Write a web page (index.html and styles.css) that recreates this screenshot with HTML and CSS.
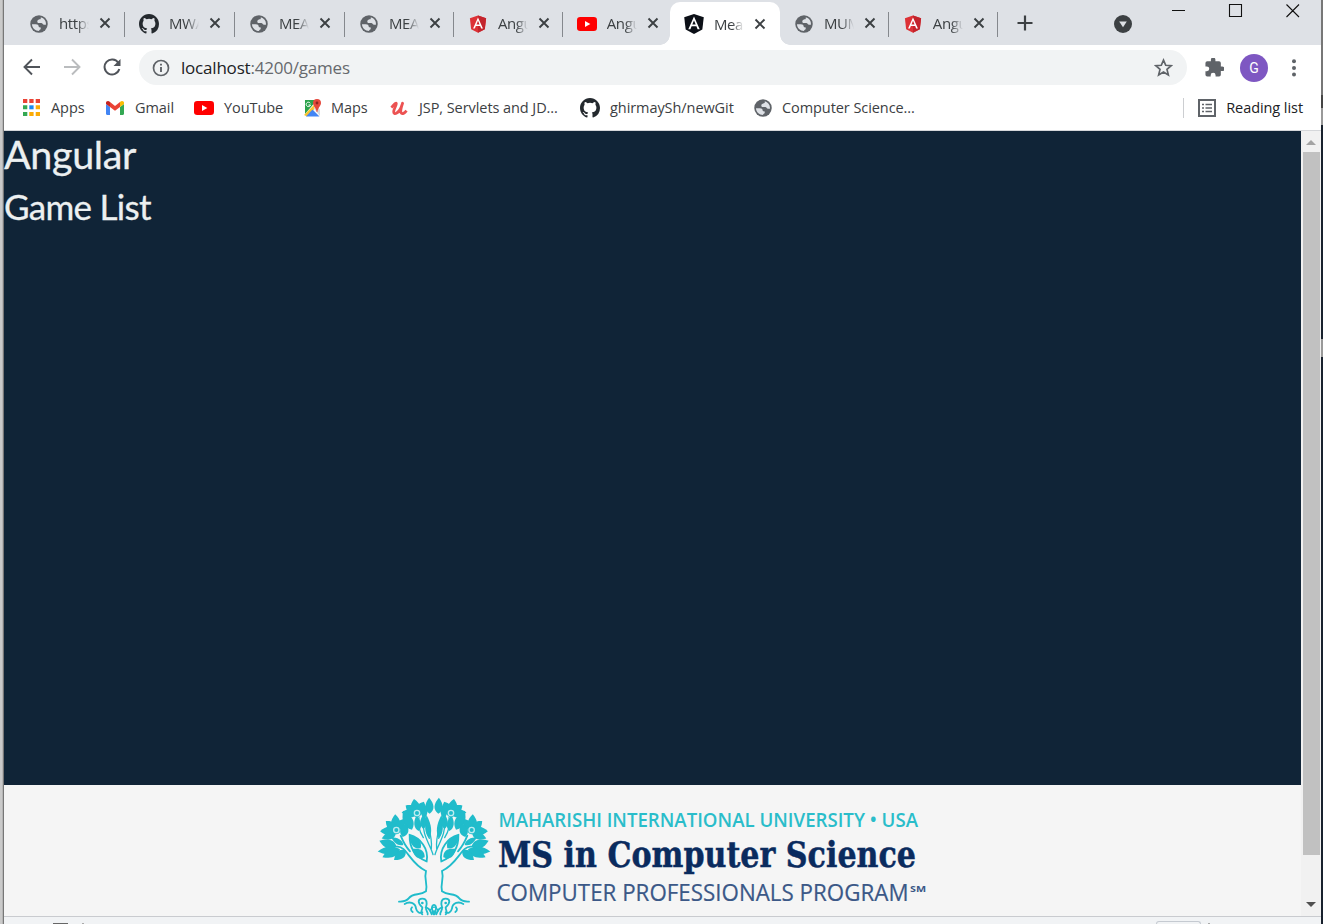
FILE: index.html
```html
<!DOCTYPE html>
<html lang="en">
<head>
<meta charset="utf-8">
<title>Games</title>
<link rel="stylesheet" href="styles.css">
</head>
<body>
<svg class="defs" width="0" height="0">
  <symbol id="globe" viewBox="0 0 20 20"><circle cx="10" cy="10" r="9.700" fill="#5f6368"/><path class="land" d="M2.200 10.400h4.300c2 0 3.100.8 3.100 2.200 0 1 .7 1.300 2.300 1.300v2c-1 .4-1.800.8-1.800 2C5.800 17.900 2.200 14.500 2.200 10.400zM12 2.500v1.400c0 1.300-3.900.8-3.900 3.200 0 1.700 1.400 1.900 3 1.900h1.500c1.400 0 1.200 1.700 2.700 1.700h2.400c.4-3.900-2-7.200-5.700-8.200z"/></symbol>
  <symbol id="github" viewBox="0 0 16 16"><path fill="#24292e" d="M8 0C3.580 0 0 3.580 0 8c0 3.540 2.290 6.530 5.470 7.590.4.070.550-.170.550-.380 0-.190-.010-.820-.010-1.490-2.010.370-2.530-.490-2.690-.940-.090-.230-.480-.940-.820-1.130-.280-.150-.680-.520-.010-.530.630-.010 1.080.580 1.230.820.720 1.210 1.870.870 2.330.660.070-.520.280-.870.510-1.070-1.780-.200-3.640-.890-3.640-3.950 0-.870.310-1.590.820-2.150-.080-.200-.360-1.020.080-2.120 0 0 .670-.210 2.200.820a7.600 7.600 0 0 1 4 0c1.530-1.040 2.200-.820 2.200-.820.440 1.100.160 1.920.080 2.120.510.560.820 1.270.820 2.150 0 3.070-1.870 3.750-3.650 3.950.290.250.540.730.540 1.480 0 1.070-.010 1.930-.010 2.200 0 .210.150.460.550.380A8 8 0 0 0 16 8c0-4.420-3.580-8-8-8z"/></symbol>
  <symbol id="ngred" viewBox="0 0 20 20"><path fill="#dd3136" d="M10 .5l9 3.200-1.400 12L10 19.800l-7.600-4.100L1 3.700z"/><path fill="#c3242c" d="M10 .5l9 3.200-1.400 12L10 19.800z"/><path fill="#fff" fill-rule="evenodd" d="M10 2.800L4.500 15h2l1.100-2.800h4.800l1.100 2.800h2zM10 6.500l1.700 4H8.300z"/></symbol>
  <symbol id="ngblack" viewBox="0 0 20 20"><path fill="#0b0f16" d="M10 0l9.800 3.300-1.500 12.200L10 20l-8.300-4.500L.2 3.300z"/><path fill="#fff" fill-rule="evenodd" d="M10 2.600L4.300 15.200h2.100l1.200-3h4.800l1.200 3h2.100zM10 6.600l1.700 4H8.300z"/></symbol>
  <symbol id="youtube" viewBox="0 0 20 14"><rect width="20" height="14" rx="3.200" fill="#f00"/><path fill="#fff" d="M8 4l5.300 3L8 10z"/></symbol>
  <symbol id="close" viewBox="0 0 12 12"><path d="M1.500 1.500l9 9M10.500 1.500l-9 9" stroke="#3c4043" stroke-width="1.900"/></symbol>
</svg>
<div class="desktop">
  <div class="edge-left"></div>
  <div class="window">
    <header class="tabs">
      <div class="tab wide"><svg class="fav"><use href="#globe"/></svg><span class="name">https:</span><svg class="x"><use href="#close"/></svg></div>
      <div class="tab wide"><svg class="fav big"><use href="#github"/></svg><span class="name">MWA</span><svg class="x"><use href="#close"/></svg></div>
      <div class="tab wide"><svg class="fav"><use href="#globe"/></svg><span class="name">MEAN</span><svg class="x"><use href="#close"/></svg></div>
      <div class="tab"><svg class="fav"><use href="#globe"/></svg><span class="name">MEAN</span><svg class="x"><use href="#close"/></svg></div>
      <div class="tab"><svg class="fav"><use href="#ngred"/></svg><span class="name">Angular</span><svg class="x"><use href="#close"/></svg></div>
      <div class="tab last"><svg class="fav big"><use href="#youtube"/></svg><span class="name">Angular</span><svg class="x"><use href="#close"/></svg></div>
      <div class="tab active"><svg class="fav big"><use href="#ngblack"/></svg><span class="name">Mean</span><svg class="x"><use href="#close"/></svg></div>
      <div class="tab"><svg class="fav"><use href="#globe"/></svg><span class="name">MUM</span><svg class="x"><use href="#close"/></svg></div>
      <div class="tab"><svg class="fav"><use href="#ngred"/></svg><span class="name">Angular</span><svg class="x"><use href="#close"/></svg></div>
      <svg class="plus" viewBox="0 0 16 16"><path d="M8 .5v15M.5 8h15" stroke="#3c4043" stroke-width="2.200"/></svg>
      <svg class="tabsearch" viewBox="0 0 18 18"><circle cx="9" cy="9" r="9" fill="#3c4043"/><path fill="#dee1e6" d="M5.200 6.500h7.600L9 12.300z"/></svg>
      <svg class="winbtns" viewBox="0 0 128 16"><path d="M0 8.500h13M57.500 2.500h12v12h-12zM114.500 2.500l12.500 12.500M127 2.500L114.500 15" fill="none" stroke="#111" stroke-width="1.100"/></svg>
    </header>
    <div class="toolbar">
      <svg class="nav" viewBox="0 0 18 18"><path d="M17 9H2M9 1.500L1.500 9 9 16.500" fill="none" stroke="#50545a" stroke-width="1.900"/></svg>
      <svg class="nav" viewBox="0 0 18 18"><path d="M1 9h15M9 1.500L16.500 9 9 16.500" fill="none" stroke="#babcbe" stroke-width="1.900"/></svg>
      <svg class="nav" viewBox="0 0 18 18"><path d="M15.300 4.800A7.500 7.500 0 1 0 16.300 11" fill="none" stroke="#50545a" stroke-width="2"/><path d="M17.500 1v7h-7z" fill="#50545a"/></svg>
      <div class="address">
        <svg class="info" viewBox="0 0 18 18"><circle cx="9" cy="9" r="7.500" fill="none" stroke="#5f6368" stroke-width="1.700"/><path d="M9 8v5M9 4.700v1.800" stroke="#5f6368" stroke-width="1.900"/></svg>
        <span class="url"><b>localhost</b>:4200/games</span>
        <svg class="star" viewBox="0 0 18 18"><path d="M9 2l2.100 4.900 5.200.4-4 3.500 1.300 5.200L9 13.200 4.400 16l1.300-5.200-4-3.500 5.200-.4z" fill="none" stroke="#5f6368" stroke-width="1.600"/></svg>
      </div>
      <svg class="puzzle" viewBox="1.500 1.500 21 21"><path fill="#5f6368" d="M20.500 11H19V7a2 2 0 0 0-2-2h-4V3.500a2.500 2.500 0 0 0-5 0V5H4a2 2 0 0 0-2 2v3.800h1.500a2.700 2.700 0 0 1 0 5.400H2V20a2 2 0 0 0 2 2h3.800v-1.500a2.700 2.700 0 0 1 5.400 0V22H17a2 2 0 0 0 2-2v-4h1.500a2.500 2.500 0 0 0 0-5z"/></svg>
      <span class="avatar">G</span>
      <svg class="dots" viewBox="0 0 4 18"><g fill="#5f6368"><circle cx="2" cy="2.200" r="2"/><circle cx="2" cy="9" r="2"/><circle cx="2" cy="15.600" r="2"/></g></svg>
    </div>
    <nav class="bookmarks">
      <a class="apps"><svg width="17" height="17" viewBox="0 0 17 17"><path fill="#ea4335" d="M0 0h4.300v4H0zM6.300 0h4.300v4H6.300zM12.700 0H17v4h-4.300z"/><path fill="#34a853" d="M0 6.300h4.300v4H0zM0 13h4.300v4H0z"/><path fill="#1a88f0" d="M6.300 6.300h4.300v4H6.300z"/><path fill="#fbab05" d="M12.700 6.300H17v4h-4.300zM6.300 13h4.300v4H6.300zM12.700 13H17v4h-4.300z"/></svg><span>Apps</span></a>
      <a class="gmail"><svg width="18" height="14" viewBox="0 0 18 14"><path fill="#4285f4" d="M0 3l4 3v8H1.200C.5 14 0 13.500 0 12.800z"/><path fill="#34a853" d="M14 6l4-3v9.800c0 .7-.5 1.200-1.200 1.200H14z"/><path fill="#ea4335" d="M4 1l5 4 5-4v5L9 9.800 4 6z"/><path fill="#c5221f" d="M0 2C0 .1 2.300-.6 4 1v5L0 3z"/><path fill="#fbbc04" d="M18 2c0-1.900-2.300-2.600-4-1v5l4-3z"/></svg><span>Gmail</span></a>
      <a class="yt"><svg width="20" height="14"><use href="#youtube"/></svg><span>YouTube</span></a>
      <a class="maps"><svg width="19" height="18" viewBox="0 0 19 18"><path fill="#2ba24c" d="M2 1h12L2 15z"/><path fill="#fbc42d" d="M1 16L11.500 5.500 13.500 8 4 17.500z"/><path fill="#d7d9dc" d="M10.500 9l3-2.500 3.500 4v6.500z"/><path fill="#4285f4" d="M3 17.500l6.500-7 7 7z"/><path d="M7.300 4.300A2.200 2.200 0 1 0 7.500 6H5.500" fill="none" stroke="#fff" stroke-width="1"/><path fill="#e5483c" d="M14 0a4 4 0 0 0-4 4c0 3.200 3.200 4.500 3.700 9h.7C14.800 8.500 18 7.200 18 4a4 4 0 0 0-4-4z"/><circle cx="14" cy="4" r="1.400" fill="#8d2620"/></svg><span>Maps</span></a>
      <a class="udemy"><svg width="18" height="16" viewBox="0 0 18 16"><path d="M1.300 7.500C3 6 5 2.500 6.200 3.200S3.500 9 3.700 11.800c.2 3.500 4.500 1.500 7-3.300L12.600 3.200c-1.300 4-2.500 7.600-1.600 9.500 1 2 3.700.4 5.500-2" fill="none" stroke="#ec5252" stroke-width="2.800" stroke-linejoin="round"/></svg><span>JSP, Servlets and JD...</span></a>
      <a class="git"><svg width="20" height="20"><use href="#github"/></svg><span>ghirmaySh/newGit</span></a>
      <a class="cs"><svg width="18" height="18"><use href="#globe"/></svg><span>Computer Science...</span></a>
      <a class="reading"><svg width="18" height="18" viewBox="0 0 18 18"><rect x="1" y="1" width="16" height="16" fill="none" stroke="#5f6368" stroke-width="2"/><path d="M4 5.500h2M7.500 5.500H14M4 9h2M7.500 9H14M4 12.500h2M7.500 12.500H14" stroke="#5f6368" stroke-width="1.700"/></svg><span>Reading list</span></a>
    </nav>
    <div class="viewport">
      <div class="page">
        <main>
          <h1>Angular</h1>
          <h2>Game List</h2>
        </main>
        <footer>
          <svg class="logo" viewBox="0 0 570 131">
            <defs>
              <path id="leaf" d="M0 0C-20-12-16-30 0-48C16-30 20-12 0 0z"/>
              <g id="half">
                <g fill="#20bccb">
                  <use href="#leaf" transform="translate(179 86) rotate(-2) scale(.9 1)"/>
                  <use href="#leaf" transform="translate(163 100) rotate(-3) scale(.75 1)"/>
                  <use href="#leaf" transform="translate(139 82) rotate(-10) scale(1 .85)"/>
                  <use href="#leaf" transform="translate(138 84) rotate(-54) scale(.95 .8)"/>
                  <use href="#leaf" transform="translate(145 82) rotate(28) scale(.9 .75)"/>
                  <use href="#leaf" transform="translate(140 88) rotate(-82) scale(.9 .95)"/>
                  <use href="#leaf" transform="translate(160 132) rotate(2) scale(.75 .95)"/>
                  <use href="#leaf" transform="translate(126 134) rotate(-25) scale(1.100 1.300)"/>
                  <use href="#leaf" transform="translate(146 138) rotate(-8) scale(.75 1)"/>
                  <use href="#leaf" transform="translate(177 160) rotate(-5) scale(.65 1.400)"/>
                  <use href="#leaf" transform="translate(78 133) rotate(-3) scale(1 .95)"/>
                  <use href="#leaf" transform="translate(76 134) rotate(-48) scale(.9 .8)"/>
                  <use href="#leaf" transform="translate(76 138) rotate(-91) scale(.95 .95)"/>
                  <use href="#leaf" transform="translate(78 145) rotate(-110) scale(.85 .95)"/>
                  <use href="#leaf" transform="translate(84 134) rotate(28) scale(.9 .75)"/>
                  <use href="#leaf" transform="translate(98 156) rotate(15) scale(.9 .9)"/>
                  <use href="#leaf" transform="translate(80 186) rotate(-70) scale(1 1.150)"/>
                  <use href="#leaf" transform="translate(78 194) rotate(-96) scale(.8 1.150)"/>
                  <use href="#leaf" transform="translate(90 193) rotate(-114) scale(.95 1.200)"/>
                  <use href="#leaf" transform="translate(107 196) rotate(-130) scale(.95 .95)"/>
                  <use href="#leaf" transform="translate(100 180) rotate(-58) scale(.6 .9)"/>
                  <use href="#leaf" transform="translate(152 190) rotate(-42) scale(.95 1.050)"/>
                  <use href="#leaf" transform="translate(164 217) rotate(-57) scale(.95 .95)"/>
                </g>
                <g fill="none" stroke="#20bccb" stroke-width="5.500" stroke-linecap="round">
                  <path d="M189 209C181 180 154 146 160 104M184 191C188 156 173 120 168 92M178 160C170 140 172 126 173 108M147 98C141 122 150 142 160 158" stroke-width="4"/>
                  <path d="M170 229C177 190 151 159 119 150C118 184 129 213 170 229z"/>
                  <path d="M80 185C110 181 119 236 168 258C161 283 174 295 168 319C148 333 130 322 116 340C108 350 98 349 87 350M92 152C100 172 110 188 120 199"/>
                  <path d="M157 367C142 354 143 341 157 341C171 341 172 354 168 367C165 376 176 382 173 388M104 357C118 348 136 353 138 370C140 380 149 387 157 382M126 367C121 372 123 378 128 381M185 388C181 376 177 368 167 367M190 360C180 366 188 377 191 388M157 367C157 378 149 383 157 388"/>
                </g>
                <circle cx="157" cy="354" r="4" fill="#20bccb"/>
                <circle cx="141" cy="84" r="13" fill="#20bccb"/>
                <circle cx="79" cy="135" r="13" fill="#20bccb"/>
                <circle cx="141" cy="84" r="8" fill="none" stroke="#bcecf0" stroke-width="4"/>
                <circle cx="79" cy="135" r="8" fill="none" stroke="#bcecf0" stroke-width="4"/>
              </g>
            </defs>
            <g transform="scale(.33333)">
              <use href="#half"/>
              <use href="#half" transform="translate(384 0) scale(-1 1)"/>
              <path d="M179 379Q192 354 206 379M184 388Q192 368 200 388" fill="none" stroke="#20bccb" stroke-width="4"/>
            </g>
            <text class="l1" x="128.500" y="42" textLength="419.500" lengthAdjust="spacingAndGlyphs">MAHARISHI INTERNATIONAL UNIVERSITY • USA</text>
            <text class="l2" x="128" y="82" textLength="418" lengthAdjust="spacingAndGlyphs">MS in Computer Science</text>
            <text class="l3" x="126.500" y="116" textLength="412" lengthAdjust="spacingAndGlyphs">COMPUTER PROFESSIONALS PROGRAM</text>
            <text class="l4" x="540" y="107" textLength="16" lengthAdjust="spacingAndGlyphs">SM</text>
          </svg>
        </footer>
      </div>
      <div class="scrollbar"><i class="up"></i><i class="thumb"></i><i class="down"></i></div>
    </div>
    <div class="below"><i class="stub"></i><i class="dot"></i><i class="box"></i><i class="dot"></i></div>
  </div>
  <div class="edge-right"></div>
</div>
</body>
</html>
```
FILE: styles.css
```css
* { box-sizing: border-box; }
body { margin: 0; overflow: hidden; font-family: "Open Sans", "Noto Sans", sans-serif; }
svg { display: block; flex: none; }
.defs { position: absolute; }
.desktop { display: flex; width: 1323px; height: 924px; }
.edge-left { width: 4px; background: linear-gradient(90deg, #cacaca 0 2px, #b6b6b6 2px 3px, #777 3px); }
.edge-right { width: 2px; background: linear-gradient(#777 0 95px, #444 95px 108px, #999 108px 125px, #18212d 125px 339px, #999 339px 357px, #18212d 357px); }
.window { width: 1317px; display: flex; flex-direction: column; background: #fff; }

.tabs { height: 45px; background: #dee1e6; display: flex; align-items: flex-start; padding-left: 11px; }
.tab { width: 108.900px; height: 45px; padding: 1px 0 0 15px; display: flex; align-items: center; position: relative; flex: none; }
.tab.wide { width: 110px; }
.tab::after { content: ""; position: absolute; right: 0; top: 12px; width: 1px; height: 25px; background: #85888d; }
.tab.last::after, .tab.active::after { display: none; }
.fav { width: 18px; height: 18px; margin: 1px 11px 0 0; }
.fav.big { width: 20px; height: 20px; margin: 1px 10px 0 -1px; }
.land { fill: #dee1e6; }
.bookmarks .land { fill: #fff; }
.name { width: 30px; overflow: hidden; white-space: nowrap; font-size: 15px; letter-spacing: -.4px; color: #3c4043; line-height: 22px; -webkit-mask-image: linear-gradient(90deg, #000 60%, transparent); mask-image: linear-gradient(90deg, #000 60%, transparent); }
.x { width: 12px; height: 12px; margin-left: 10px; }
.tab.active { width: 110px; height: 43px; margin-top: 2px; padding-top: 0; background: #fff; border-radius: 10px 10px 0 0; }
.tab.active::before { content: ""; position: absolute; left: -10px; right: -10px; bottom: 0; height: 10px; background: radial-gradient(circle at 0 0, transparent 9.500px, #fff 10px) left / 10px 10px no-repeat, radial-gradient(circle at 100% 0, transparent 9.500px, #fff 10px) right / 10px 10px no-repeat; }
.tab.last { width: 107.200px; }
.plus { width: 16px; height: 16px; margin: 15px 0 0 19px; }
.tabsearch { width: 18px; height: 18px; margin: 15px 0 0 81px; }
.winbtns { width: 128px; height: 16px; margin: 2px 0 0 40px; }

.toolbar { height: 45px; display: flex; align-items: center; padding-left: 19px; }
.nav { width: 18px; height: 18px; margin: -1px 22px 0 0; }
.address { width: 1048px; height: 35px; margin: 0 18px 0 -4px; padding: 0 14px 0 13px; border-radius: 18px; background: #f1f3f4; display: flex; align-items: center; }
.info { width: 18px; height: 18px; }
.url { flex: 1; margin-left: 11px; font-size: 17px; line-height: 24px; letter-spacing: -.2px; color: #66696d; }
.url b { font-weight: 400; color: #202124; }
.star { width: 19px; height: 19px; }
.puzzle { width: 19px; height: 19px; }
.avatar { width: 28px; height: 28px; margin: 1px 0 0 16px; border-radius: 50%; background: #7e57c2; color: #fff; font: 14px/28px Roboto, sans-serif; text-align: center; }
.dots { width: 4px; height: 18px; margin-left: 24px; }

.bookmarks { height: 41px; display: flex; align-items: center; border-bottom: 1px solid #d5d7da; padding: 0 18px 5px 19px; font-size: 14.500px; letter-spacing: -.07px; color: #3c4043; }
.bookmarks a { display: flex; align-items: center; white-space: nowrap; }
.bookmarks span { margin-top: -1px; }
.bookmarks svg { margin-right: 10px; }
.apps { width: 83px; }
.bookmarks .apps svg { margin: 0 11px 0 0; }
.gmail { width: 88px; }
.bookmarks .gmail svg { margin-right: 11px; }
.yt { width: 109px; }
.maps { width: 87px; }
.bookmarks .maps svg { margin-right: 9px; }
.udemy { width: 190px; }
.bookmarks .udemy svg { margin-right: 11px; }
.git { width: 174px; }
.reading { margin-left: auto; border-left: 1px solid #ccced1; height: 20px; padding-left: 14px; color: #202124; }

.viewport { height: 785px; display: flex; }
.page { width: 1297px; display: flex; flex-direction: column; font-family: Lato, sans-serif; }
main { height: 654px; background: #102437; color: #ecf0f1; }
h1, h2 { margin: 0; font-weight: 400; -webkit-text-stroke: .3px #ecf0f1; }
h1 { font-size: 39.500px; line-height: 46px; letter-spacing: -.35px; }
h2 { font-size: 35px; line-height: 42px; margin-top: 8px; letter-spacing: -.7px; }
footer { height: 131px; background: #f5f5f5; padding-left: 366px; }
.logo { width: 570px; height: 131px; }
.l1 { font: 600 19.500px "Open Sans"; fill: #2abdca; }
.l2 { font: 700 34.500px "Roboto Slab", "DejaVu Serif"; fill: #0a2b5e; stroke: #0a2b5e; stroke-width: .5px; }
.l3 { font: 400 23.500px "Open Sans"; fill: #3b5887; stroke: #3b5887; stroke-width: .2px; }
.l4 { font: 700 9.500px "Open Sans"; fill: #3b5887; }
.scrollbar { width: 20px; background: #f1f1f1; display: flex; flex-direction: column; align-items: center; }
.up { border: 5px solid transparent; border-top: 0; border-bottom: 5px solid #a3a3a3; margin-top: 9px; }
.thumb { width: 17px; height: 703px; margin-top: 7px; background: #c1c1c1; }
.down { border: 5px solid transparent; border-bottom: 0; border-top: 5px solid #505050; margin-top: 47px; }
.below { height: 8px; border-top: 1px solid #c9cbcf; background: #f1f3f5; display: flex; align-items: flex-end; padding-left: 49px; }
.stub { width: 15px; height: 1px; background: #666; }
.dot { width: 2px; height: 1px; background: #aaa; margin-left: 14px; }
.box { width: 45px; height: 3px; margin-left: 1072px; border: 1px solid #c5cad1; border-bottom: 0; border-radius: 3px 3px 0 0; }
.box + .dot { margin-left: 7px; }
```
